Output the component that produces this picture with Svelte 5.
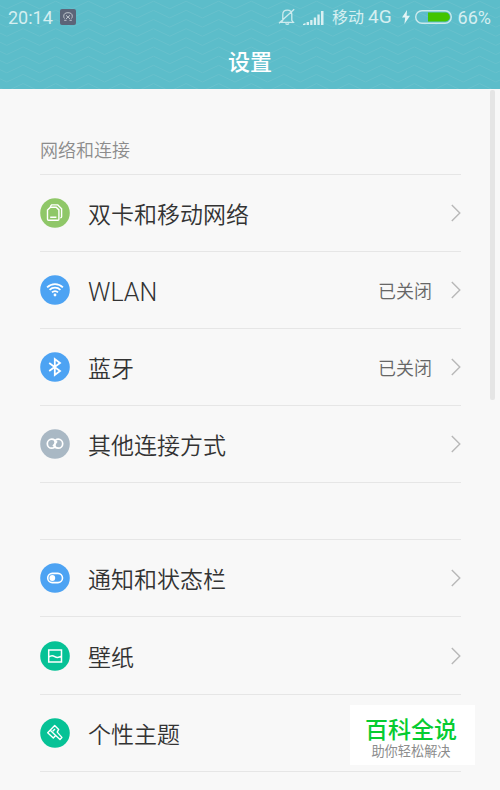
<script lang="ts">
  type Item = { icon: string; label: string; tone: string; value?: string };

  const network: Item[] = [
    { icon: 'sim', label: '双卡和移动网络', tone: '#8fc768' },
    { icon: 'wifi', label: 'WLAN', tone: '#4da3f3', value: '已关闭' },
    { icon: 'bluetooth', label: '蓝牙', tone: '#4da3f3', value: '已关闭' },
    { icon: 'link', label: '其他连接方式', tone: '#a9b8c4' }
  ];

  const personal: Item[] = [
    { icon: 'toggle', label: '通知和状态栏', tone: '#4da3f3' },
    { icon: 'wallpaper', label: '壁纸', tone: '#06c296' },
    { icon: 'theme', label: '个性主题', tone: '#06c296' }
  ];

  // Zigzag lines behind the header: peaks every 32.6px, one line every 9.15px.
  const zigzag = Array.from({ length: 34 }, (_, i) => `${(-9.5 + i * 16.3).toFixed(1)},${i % 2 ? 8.8 : 1.2}`).join(' ');
  const lines = Array.from({ length: 11 }, (_, i) => (i - 1) * 9.15);
</script>

{#snippet row(item: Item)}
  <li class="row">
    <svg class="icon" viewBox="0 0 30 30" fill="none" stroke="#fff" stroke-width="1.4">
      <circle cx="15" cy="15" r="14.8" fill={item.tone} stroke="none" />
      {#if item.icon === 'sim'}
        <path d="M10.4 9.2h5.8l2.7 2.7v9.3q0 1-1 1H8.5q-1 0-1-1v-9.2zM10.2 8.6l1.4-1.7h6.2l3.8 3.8v8q0 1-1.3 1M10.2 19.2h6.2" />
      {:else if item.icon === 'wifi'}
        <path d="M7.1 12.3a11.2 11.2 0 0 1 15.8 0M9.6 14.8a7.7 7.7 0 0 1 10.8 0M12 17.3a4.2 4.2 0 0 1 6 0" stroke-width="1.8" />
        <circle cx="15" cy="20" r="1.4" fill="#fff" stroke="none" />
      {:else if item.icon === 'bluetooth'}
        <path d="m9.2 11 10.8 8-5.2 4V7l5.2 4-10.8 8" stroke-width="1.8" />
      {:else if item.icon === 'link'}
        <path d="M14.6 18.2Q13.2 19.2 11.8 19.2A4.5 4.5 0 0 1 11.8 10.2Q15.2 10.2 15.2 13.2 15.2 14.8 13 17.2M15.4 11.2Q16.8 10.200 18.200 10.200A4.500 4.500 0 0 1 18.200 19.200Q14.800 19.200 14.800 16.200 14.800 14.600 17 12.200" stroke-width="1.7" />
      {:else if item.icon === 'toggle'}
        <rect x="7.7" y="10.4" width="14.8" height="9.2" rx="4.6" stroke-width="1.6" />
        <circle cx="12.3" cy="15" r="2.9" fill="#fff" stroke="none" />
      {:else if item.icon === 'wallpaper'}
        <path d="M8.7 9.1h12.8v11.8H8.7zM8.7 16.2q3-2.5 6-.6t6.8-.4" stroke-width="1.5" />
      {:else}
        <path d="M7.7 14.7 14.7 7.5l4 3.9-1.5 2.7 4.7 5.3-1.9 2-4.3-4-2.400 2.500zM10.200 12.300l5.500 5.100M15 10.900l-2.300 2.300" stroke-linejoin="round" />
      {/if}
    </svg>
    <span class="label" class:latin={item.label === 'WLAN'}>{item.label}</span>
    {#if item.value}
      <span class="value">{item.value}</span>
    {/if}
    <svg class="chevron" viewBox="0 0 10 18"><path d="m.8 1 8 8-8 8" /></svg>
  </li>
{/snippet}

<div class="screen">
  <header>
    <svg class="waves" aria-hidden="true">
      {#each lines as y}
        <polyline points={zigzag} transform="translate(0 {y})" />
      {/each}
    </svg>
    <div class="status">
      <span class="time">20:14</span>
      <svg class="app" viewBox="0 0 16 16" fill="none">
        <rect width="16" height="16" rx="2" fill="#5c6478" />
        <path d="M4.5 9.5Q3.7 8.5 3.7 7.3 3.7 3.7 8 3.7t4.3 3.6q0 1.2-.8 2.2M6 6.3l4 3.6M10 6.3l-4 3.6M4.2 11.3h2.3M9.5 11.3h2.3" stroke="#c9cfd6" stroke-width=".9" />
      </svg>
      <span class="spacer"></span>
      <svg class="bell" viewBox="0 0 18 18" fill="none" stroke="#cdebee" stroke-width="1.3">
        <path d="M3.2 14.3h12.2l-1.6-2V6.5q0-4.3-4.5-4.3T4.8 6.5v5.8zM1 15.2 16.2 1.2M7.5 15.5q1.8 1.5 3.6 0" />
      </svg>
      <svg class="signal" viewBox="0 0 21 15" fill="#d9f0f2">
        <path d="M0 15v-1l2.5-1v2zM3.6 12H6v3H3.6zM7.2 10h2.3v5H7.2zM10.8 7.5h2.3V15h-2.3zM14.4 4.5h2.3V15h-2.3zM18 1h2.5v14H18z" />
      </svg>
      <span class="carrier">移动 <span class="net">4G</span></span>
      <svg class="bolt" viewBox="0 0 8 14" fill="#e2f4f5"><path d="M5 0 0 7.6h3.2L2.4 14 8 5.7H4.7z" /></svg>
      <svg class="battery" viewBox="0 0 37 14">
        <rect x=".7" y=".7" width="35.6" height="12.6" rx="6.3" fill="none" stroke="#cdeaed" stroke-width="1.4" />
        <path d="M13 2.6h17.5a4.4 4.4 0 0 1 0 8.8H13z" fill="#43c400" />
      </svg>
      <span class="percent">66%</span>
    </div>
    <h1>设置</h1>
  </header>

  <main>
    <h2>网络和连接</h2>
    <ul>
      {#each network as item}
        {@render row(item)}
      {/each}
    </ul>
    <ul class="second">
      {#each personal as item}
        {@render row(item)}
      {/each}
    </ul>
  </main>

  <div class="scrollbar"></div>
  <aside class="badge">
    <strong>百科全说</strong>
    <span>助你轻松解决</span>
  </aside>
</div>

<style>
  :global(body) {
    margin: 0;
  }

  .screen {
    position: relative;
    width: 500px;
    height: 790px;
    overflow: hidden;
    background: #f8f8f8;
    color: #333;
    font-family: Roboto, 'Noto Sans CJK SC', sans-serif;
  }

  header {
    position: relative;
    height: 89px;
    background: #5cbdca;
    color: #fff;
  }

  .waves {
    position: absolute;
    inset: 0;
    width: 500px;
    height: 89px;
    fill: none;
    stroke: #68c1cd;
    stroke-width: 1;
  }

  .status {
    position: relative;
    display: flex;
    align-items: center;
    height: 34px;
    padding: 0 9px 0 8px;
    font-size: 18px;
    line-height: 35px;
    color: #d5eff1;
    white-space: nowrap;
  }

  .app {
    width: 16px;
    height: 16px;
    margin-left: 7px;
  }

  .spacer {
    flex: 1;
  }

  .bell {
    width: 18px;
    height: 18px;
    margin-right: 7px;
  }

  .signal {
    width: 21px;
    height: 15px;
    margin-right: 8px;
  }

  .carrier {
    font-size: 16px;
  }

  .net {
    font-size: 19px;
  }

  .bolt {
    width: 8px;
    height: 14px;
    margin: 0 5px 0 10px;
  }

  .battery {
    width: 37px;
    height: 14px;
    margin-right: 6px;
  }

  h1 {
    position: relative;
    margin: 13px 0 0;
    font-size: 22px;
    line-height: 32px;
    font-weight: 500;
    text-align: center;
  }

  main {
    padding: 46px 39px 0 40px;
  }

  h2 {
    margin: 0;
    height: 39px;
    font-size: 18px;
    line-height: 31px;
    font-weight: 350;
    color: #8c8c8c;
  }

  ul {
    margin: 0;
    padding: 0;
    list-style: none;
    border-top: 1px solid #e6e6e6;
  }

  .second {
    margin-top: 56px;
  }

  .row {
    display: flex;
    align-items: center;
    box-sizing: border-box;
    height: 77.1px;
    border-bottom: 1px solid #e6e6e6;
  }

  .icon {
    width: 30px;
    height: 30px;
  }

  .label {
    flex: 1;
    margin-left: 18px;
    padding-top: 6px;
    font-size: 23px;
    line-height: 34px;
    font-weight: 350;
  }

  .latin {
    font-size: 25px;
  }

  .value {
    margin-right: 19px;
    font-size: 18px;
    font-weight: 350;
    color: #666;
  }

  .chevron {
    width: 10px;
    height: 18px;
    fill: none;
    stroke: #b8b8b8;
    stroke-width: 1.4;
  }

  .scrollbar {
    position: absolute;
    top: 90px;
    right: 5px;
    width: 5px;
    height: 310px;
    border-radius: 2px;
    background: #e5e5e5;
  }

  .badge {
    position: absolute;
    left: 350px;
    top: 705px;
    display: flex;
    flex-direction: column;
    align-items: center;
    box-sizing: border-box;
    width: 125px;
    height: 60px;
    padding-right: 3px;
    background: #fff;
  }

  .badge strong {
    margin-top: 9px;
    font-size: 23px;
    line-height: 34px;
    font-weight: 500;
    color: #06cc31;
  }

  .badge span {
    margin-top: -6px;
    font-size: 13.2px;
    line-height: 20px;
    color: #8c8c8c;
  }
</style>
